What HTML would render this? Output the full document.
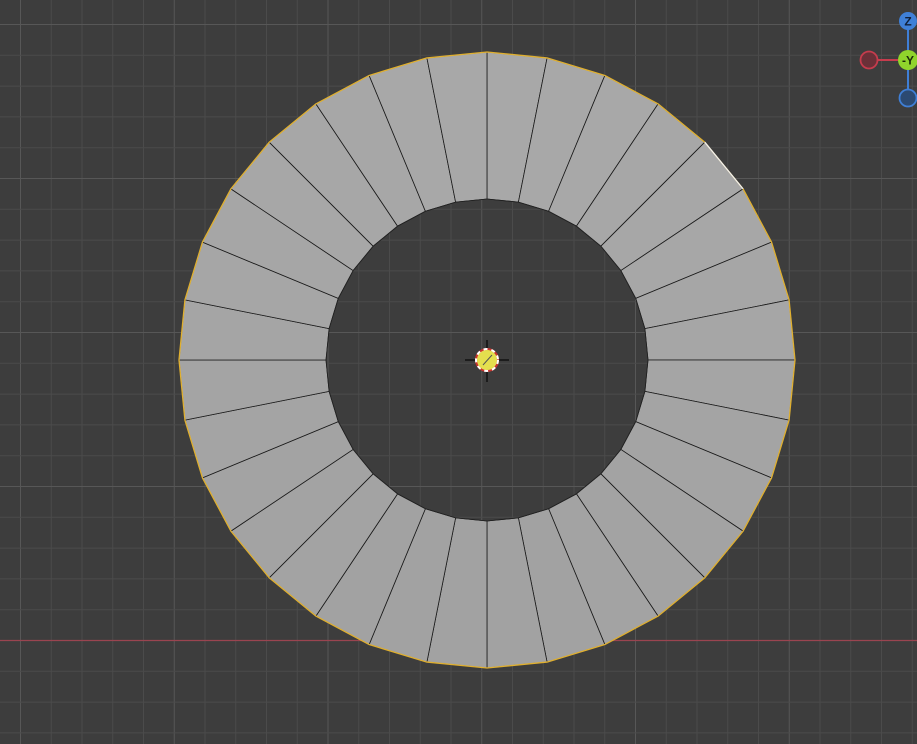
<!DOCTYPE html>
<html><head><style>
html,body{margin:0;padding:0;background:#3d3d3d;overflow:hidden}
svg{display:block}
</style></head><body>
<svg id="s" width="917" height="744" xmlns="http://www.w3.org/2000/svg">
<rect width="917" height="744" fill="#3d3d3d"/>
<g id="grid"></g>
<line x1="0" y1="640.5" x2="917" y2="640.5" stroke="#9a4450" stroke-width="1.3"/>
<g id="ring"></g>
<g>
<line x1="487" y1="340" x2="487" y2="382" stroke="#111" stroke-width="1.5"/>
<line x1="465" y1="360" x2="509" y2="360" stroke="#111" stroke-width="1.5"/>
<circle cx="487" cy="360" r="11" fill="#e4df4e" stroke="#c8332d" stroke-width="2"/>
<circle cx="487" cy="360" r="11" fill="none" stroke="#fff" stroke-width="2" stroke-dasharray="4 4"/>
<line x1="483" y1="365" x2="492" y2="355" stroke="#555" stroke-width="1"/>
</g>
<g font-family="Liberation Sans, sans-serif" font-weight="bold" font-size="12">
<line x1="908" y1="21" x2="908" y2="98" stroke="#3f7fd6" stroke-width="2"/>
<line x1="869" y1="60" x2="908" y2="60" stroke="#c63c4d" stroke-width="2"/>
<circle cx="908" cy="21" r="9" fill="#3f80d8"/>
<text x="908" y="25.5" text-anchor="middle" fill="#10203a">Z</text>
<circle cx="869" cy="60" r="8.5" fill="#6a3038" stroke="#c63c4d" stroke-width="1.8"/>
<circle cx="908" cy="98" r="8.5" fill="#2c4a72" stroke="#3f7fd6" stroke-width="1.8"/>
<circle cx="908" cy="60" r="10" fill="#90d42c"/>
<text x="908" y="64.5" text-anchor="middle" fill="#1a2a08">-Y</text>
</g>
</svg>
<script>
var NS="http://www.w3.org/2000/svg";
var g=document.getElementById("grid"),h="";
for(var i=0;i<31;i++){var x=20+30.75*i;var maj=(i%5==0);h+='<line x1="'+(x+.5)+'" y1="0" x2="'+(x+.5)+'" y2="744" stroke="'+(maj?"#575757":"#4b4b4b")+'" stroke-width="1"/>';}
for(var j=0;j<25;j++){var y=24+30.8*j;var maj=((j-20)%5==0);h+='<line x1="0" y1="'+(y+.5)+'" x2="917" y2="'+(y+.5)+'" stroke="'+(maj?"#575757":"#4b4b4b")+'" stroke-width="1"/>';}
g.innerHTML=h;
var cx=487,cy=360,R=308,r=161,N=32,o=[],n=[];
for(var k=0;k<N;k++){var a=k*2*Math.PI/N;o.push([cx+R*Math.sin(a),cy-R*Math.cos(a)]);n.push([cx+r*Math.sin(a),cy-r*Math.cos(a)]);}
var s="";
for(var k=0;k<N;k++){var k2=(k+1)%N;var shade=165+Math.round(3*Math.cos(k*2*Math.PI/N));
s+='<polygon points="'+o[k]+' '+o[k2]+' '+n[k2]+' '+n[k]+'" fill="rgb('+shade+','+shade+','+shade+')" stroke="#1a1a1a" stroke-width="0.8" stroke-linejoin="round"/>';}
var p=o.map(function(v){return v.join(",")}).join(" ");
s+='<polygon points="'+p+'" fill="none" stroke="#e0b030" stroke-width="1.3"/>';
s+='<line x1="'+o[4]+'".replace() />';
s=s.replace('<line x1="'+o[4]+'".replace() />','');
s+='<line x1="'+o[4][0]+'" y1="'+o[4][1]+'" x2="'+o[5][0]+'" y2="'+o[5][1]+'" stroke="#f0f0f0" stroke-width="1.3"/>';
var ip=n.map(function(v){return v.join(",")}).join(" ");
s+='<polygon points="'+ip+'" fill="none" stroke="#222" stroke-width="0.8"/>';
document.getElementById("ring").innerHTML=s;
</script>
</body></html>
